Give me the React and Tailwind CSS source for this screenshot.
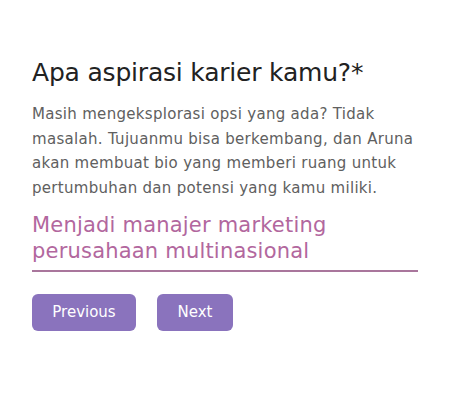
import React from 'react';

// Pertanyaan aspirasi karier
const App = () => {
  return (
    <div className="w-[452px] h-[413px] bg-white px-[32px] pt-[55px]" style={{ fontFamily: '"DejaVu Sans", sans-serif' }}>
      <h2 className="text-[25px] leading-[36px] text-[#222222] font-normal tracking-[-0.2px]">
        Apa aspirasi karier kamu?*
      </h2>

      <p className="mt-[11px] text-[15px] leading-[24.5px] text-[#606060] tracking-[0.3px] w-[392px]">
        Masih mengeksplorasi opsi yang ada? Tidak masalah. Tujuanmu bisa berkembang, dan Aruna akan membuat bio yang memberi ruang untuk pertumbuhan dan potensi yang kamu miliki.
      </p>

      <div className="mt-[12px] w-[386px] border-b-2 border-[#a9769c] pb-[6px]">
        <p className="text-[21px] leading-[26px] text-[#b2679e] tracking-[0.2px]">
          Menjadi manajer marketing perusahaan multinasional
        </p>
      </div>

      <div className="mt-[22px] flex gap-[21px]">
        <button className="h-[37px] w-[104px] rounded-[6px] bg-[#8a73bd] text-white text-[15px]">
          Previous
        </button>
        <button className="h-[37px] w-[76px] rounded-[6px] bg-[#8a73bd] text-white text-[15px]">
          Next
        </button>
      </div>
    </div>
  );
};

export default App;
